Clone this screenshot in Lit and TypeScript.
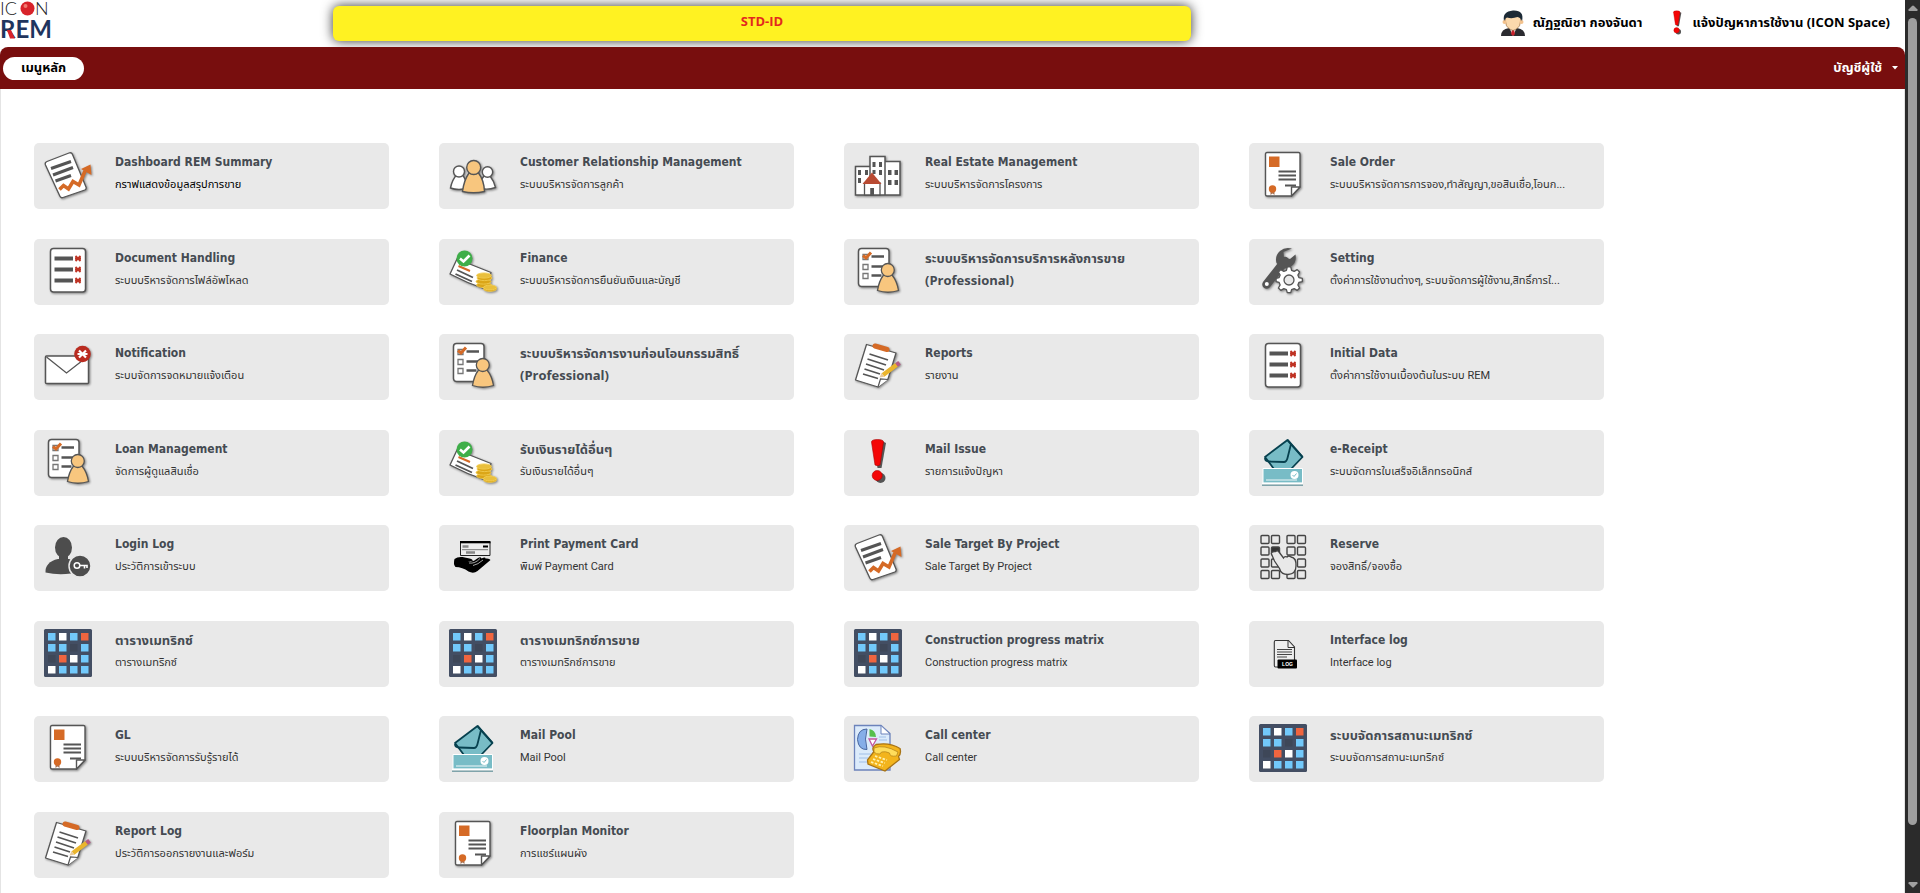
import { LitElement, html, svg, css, nothing, TemplateResult } from "lit";
import { customElement, property } from "lit/decorators.js";

const INK = "#555";
const ORANGE = "#d56a26";
const SKIN = "#f8c67e";

const sheet = svg`
  <g fill="#fff" stroke=${INK} stroke-width="1.3" stroke-linejoin="round">
    <path d="M3 10.5 25 2q2.500-1 3.500 1.500L42 36q.8 2-1.200 3L19 46.500q-2.200.8-3.200-1.500L1.500 14q-1-2.500 1.500-3.500z"/>
  </g>
  <g stroke=${INK} stroke-width="3">
    <path d="M7 17.500 27 10.500M9 24 29 16.500M11.500 30 27 24.500"/>
  </g>
  <path d="M15.500 38.500 19.500 34.500 24.500 38 29 30.500 35 34 41 20" fill="none" stroke=${ORANGE} stroke-width="3.600"/>
  <path d="M37 18 46.500 13.500 47.500 24z" fill=${ORANGE}/>`;

const people = svg`
  <g stroke=${INK} stroke-width="1.400" fill="#fff">
    <path d="M1.500 37Q3 29 7.500 24h6q4 5 5 13Q10 40 1.500 37zM30.500 37q1-8 4.500-12h6q4 5 5.500 11.500Q38 39.500 30.500 37z"/>
    <circle cx="10" cy="20.500" r="5.500"/><circle cx="38.500" cy="21" r="5.200"/>
    <path fill=${SKIN} d="M13.500 40.500Q15 29 20 22h9.500Q35 29 35.500 40.500q-11 2.500-22 0z"/>
    <circle fill=${SKIN} cx="24.700" cy="16.500" r="7"/>
  </g>`;

const town = svg`
  <g stroke=${INK} stroke-width="1.500" fill="#fff">
    <path d="M1.500 15.500H16V44H1.500zM31 10.500h15V44H31zM16 5.500h15V44H16z"/>
  </g>
  <path fill=${INK} d="M4 19h3v5H4zM11 19h3v5h-3zM4 27h3v5H4zM18.500 11h3v5h-3zM25 11h3v5h-3zM18.500 19h3v4h-3zM25 19h3v5h-3zM34 19h3.500v5H34zM40.500 19H44v5h-3.500zM34 29h3.500v5H34zM40.500 29H44v5h-3.500z"/>
  <path d="M10.500 32H26v12H10.500z" fill="#fff" stroke=${INK} stroke-width="1.300"/>
  <path d="M8.500 33 18 21.500 27.500 33z" fill="#b84a32"/><path d="M16.200 37h3.800v8h-3.800z" fill=${INK}/>`;

const certificate = svg`
  <path d="M8 1.500h31.500q1.500 0 1.500 1.500V36l-8.500 9H8q-1.500 0-1.500-1.500V3q0-1.500 1.500-1.500z" fill="#fff" stroke=${INK} stroke-width="1.400"/>
  <path d="M41 36h-8.500v9z" fill="#fff" stroke=${INK} stroke-width="1.400" stroke-linejoin="round"/>
  <path d="M10 5.500h10.500V16H10z" fill=${ORANGE}/>
  <path d="M19.500 20.500H37M19.500 24.500H37M19.500 28.500H37M26 34.500H37" stroke=${INK} stroke-width="2.200"/>
  <path d="M11.500 40v4l2-1.500 2 1.500v-4z" fill="#a9775a"/><circle cx="13.500" cy="38" r="3.700" fill=${ORANGE}/>`;

const list = svg`
  <rect x="6.500" y="1.500" width="35" height="43.500" rx="3" fill="#fff" stroke=${INK} stroke-width="1.500"/>
  <path d="M10.500 11.500h18.500M10.500 22.500h18.500M10.500 33.500h18.500" stroke=${INK} stroke-width="3.800"/>
  <g stroke="#bf3324" stroke-width="1.800">
    ${[11.5, 22.5, 33.5].map((y) => svg`<path d="M31.500 ${y - 2.5}l5 5M36.500 ${y - 2.5}l-5 5M31 ${y}h6"/>`)}
  </g>`;

const envelope = svg`
  <rect x="1.500" y="14" width="43" height="27.500" rx="1" fill="#fff" stroke=${INK} stroke-width="1.500"/>
  <path d="M2.500 15 22.500 31 43 15" fill="none" stroke=${INK} stroke-width="1.300"/>
  <circle cx="38.500" cy="12" r="8.300" fill="#b92b20"/>
  <path d="M35 8.500l7 7M42 8.500l-7 7M33.500 12h10" stroke="#fff" stroke-width="2.200"/>`;

const cheque = svg`
  <path d="M1 27 8 12 42 25.500 36 42Q18 36 1 27z" fill="#fff" stroke=${INK} stroke-width="1.300" stroke-linejoin="round"/>
  <path d="M9.500 19 21 24" stroke=${ORANGE} stroke-width="2"/>
  <path d="M8 23 24 30.500M6.500 27 23 34.500" stroke=${INK} stroke-width="1.800"/>
  <circle cx="15.500" cy="11.500" r="8" fill="#3fae49"/>
  <path d="M11 11.500 14.500 14.500 20.500 8.500" fill="none" stroke="#fff" stroke-width="2.600"/>
  <g fill="#dba618" stroke="#f2ce55" stroke-width=".8">
    <ellipse cx="35" cy="38" rx="7.500" ry="2.600"/><ellipse cx="34.500" cy="34.500" rx="7.500" ry="2.600"/>
    <ellipse cx="35.500" cy="31" rx="7.500" ry="2.600"/><ellipse cx="35" cy="28.500" rx="7.500" ry="2.600" fill="#e9bf3c"/>
    <ellipse cx="41" cy="42" rx="6.500" ry="2.400"/><ellipse cx="41" cy="40.500" rx="6.500" ry="2.400" fill="#e9bf3c"/>
  </g>`;

const checklist = svg`
  <rect x="4.500" y="1.500" width="30.500" height="38" rx="3" fill="#fff" stroke=${INK} stroke-width="1.500"/>
  <g fill="#fff" stroke="#777" stroke-width="1.300">
    <path d="M9 7.500h5v5H9zM9 17.500h5v5H9zM9 26.500h5v5H9z"/>
  </g>
  <path d="M17.500 9.500H30M17.500 19.500h12M17.500 28.500h10" stroke=${INK} stroke-width="2.600"/>
  <path d="M9 8.500 12 11 17 5.500" fill="none" stroke=${ORANGE} stroke-width="3"/>
  <g fill=${SKIN} stroke=${INK} stroke-width="1.300">
    <path d="M23.500 43.500Q25 34 29.500 28h8.500q5 6 6.500 15.500-10.500 3.500-21 0z"/><circle cx="33.800" cy="23" r="6.500"/>
  </g>`;

const tools = svg`
  <path d="M7.500 37.500 26 14" stroke=${INK} stroke-width="8.500" stroke-linecap="round"/>
  <path d="M33 1.500q-7-2-12 2.500-5.500 5-3.500 12l5.500 5.500q9 .5 12.500-5.500 2-4 1-8.500l-5.500 4.500-6-1-.5-6z" fill=${INK}/>
  <circle cx="7.800" cy="37" r="2" fill="#fff"/>
  <g transform="translate(30 33) scale(.86) translate(-29.500 -35.250)" fill="#fff" stroke=${INK} stroke-width="1.500" stroke-linejoin="round">
    <path d="M27.500 20h4l1 4 3 1.200 3.500-2 2.800 2.800-2 3.500 1.200 3 4 1v3.500l-4 1-1.200 3 2 3.500-2.800 2.800-3.500-2-3 1.200-1 3.500h-4l-1-3.500-3-1.200-3.500 2-2.800-2.800 2-3.500-1.200-3-3.500-1v-3.500l3.500-1 1.200-3-2-3.500 2.800-2.800 3.500 2 3-1.200z"/>
    <circle cx="29.500" cy="35.250" r="5.800" fill="#e9e9e9"/>
  </g>`;

const clipboard = svg`
  <path d="M12.500 2.500 42 11 34 37 24 45 1.500 38z" fill="#fff" stroke=${INK} stroke-width="1.300" stroke-linejoin="round"/>
  <path d="M24 45l2.500-8 7.500.5" fill="#fff" stroke=${INK} stroke-width="1.200"/>
  <path d="M15.500 12 34 18M13.500 17 32 23M12 22 30 28M10.500 27 26 32M9 32 24 36.500" stroke=${INK} stroke-width="1.700"/>
  <path d="M21 4 33 7.500" stroke=${ORANGE} stroke-width="5" stroke-linecap="round"/>
  <path d="M29 33 43 22.500" stroke="#eab52d" stroke-width="4.500"/>
  <path d="M25.500 35.500l2-4.500 3 3.800z" fill="#e8c99a"/><path d="M42.500 23l3-2.200" stroke="#b65a86" stroke-width="4.500"/>`;

const exclamation = svg`
  <path d="M20 5q6-4 12 0l-4.500 25h-4z" fill="#555"/><circle cx="26.500" cy="40" r="5" fill="#555"/>
  <path d="M17.500 4q0-2.500 6-2.500T29.500 4L26 27q-2.500 1.500-5 0z" fill="#f40606" stroke="#a00" stroke-width=".6"/>
  <circle cx="23.200" cy="37.500" r="5" fill="#f40606" stroke="#a00" stroke-width=".6"/>`;

const mailbox = svg`
  <path d="M6 19 28.500 2 43.500 19 32 31H15z" fill="#78bcc6" stroke="#07414f" stroke-width="1.800" stroke-linejoin="round"/>
  <path d="M6 20q0 3.500 4 3.500l15 .5q2.500 0 3.500-4L32 6" fill="none" stroke="#07414f" stroke-width="1.800"/>
  <path d="M28.500 2 43.500 19" stroke="#07414f" stroke-width="2"/>
  <path d="M4 30.500h39.500V45H4z" fill="#78bcc6" stroke="#fff" stroke-width="1"/>
  <path d="M7 42h31" stroke="#fff" stroke-width=".9"/><circle cx="35.500" cy="37" r="4" fill="#fff"/>
  <path d="M33.500 37l1.500 1.500 2.500-3" fill="none" stroke="#78bcc6"/>
  <path d="M3 45.500h41" stroke="#fff" stroke-width="1.600"/><path d="M3 47.200h41" stroke="#7fa3aa" stroke-width="1.400"/>`;

const userKey = svg`
  <path d="M1.500 39.500q-.5-10.500 12.500-13.500l11 0q4 1 6 3l-4 11.500q-13 2-25.500-1z" fill="#4d4d4d"/>
  <ellipse cx="19.500" cy="14.500" rx="8.500" ry="10.500" fill="#4d4d4d"/><path d="M15 22h9v7h-9z" fill="#4d4d4d"/>
  <circle cx="36" cy="33" r="11" fill="#4d4d4d" stroke="#e9e9e9" stroke-width="1.500"/>
  <circle cx="33" cy="32.500" r="2.800" fill="none" stroke="#fff" stroke-width="1.500"/>
  <path d="M36 32.500h7v2.500M40.500 32.500v3" fill="none" stroke="#fff" stroke-width="1.600"/>`;

const payment = svg`
  <path d="M11.500 9h29.500v13.500H11.500z" fill="#eee" stroke="#222"/><path d="M11 8h30.500v2.300H11z"/>
  <path d="M34 13.500h5" stroke="#000" stroke-width="2"/><path d="M13.500 13.500h6M17 19.500h9" stroke="#888" stroke-width="2.400"/>
  <path d="M13 16.700h26" stroke="#777"/>
  <path d="M5.500 26q3-2.500 8-2l7 1.500q4 1 3 2.500l-5 0q6 1.500 9-2 4-3 5-.5 4-2 4 0 4-.500 5 1.500l-13 11q-4 3-9 .5-6-4.500-13-4.500-2.500-3-1-8z"/>
  <path d="M20 30q6 1 11-4.500M24 32.500q5-1 10-5.500" stroke="#e9e9e9" stroke-width=".7" fill="none"/>`;

const CELLS = ["bwbo", "bb-b", "-owb", "wbbb"];
const CELL_FILL: Record<string, string> = { b: "#72c9fb", w: "#fff", o: "#f0653f", "-": "#3e4758" };
const matrix = svg`
  <rect width="48" height="48" rx="1.500" fill="#434e63"/>
  ${CELLS.flatMap((row, r) =>
    [...row].map((c, i) => svg`<rect x=${4 + i * 11} y=${4 + r * 11} width="7.500" height="7.500" fill=${CELL_FILL[c]}/>`)
  )}`;

const seats = svg`
  ${[2.5, 14, 26, 37.5].map((y) =>
    [2, 12.5, 28, 38.5].map((x) => svg`<rect x=${x} y=${y} width="8" height="8" rx="1" fill=${x === 12.5 && y === 14 ? "#333" : "none"} stroke="#444" stroke-width="1.400"/>`)
  )}
  <path d="M16.500 18.500q2-1.500 3.500.5l4.500 6q1-2 3.500-1 1.500-2 4 0 5.500 1 5 9 0 8-8 8.500-7 0-8.500-6l-5-7.500-3-7q-.5-2 3-2.500z" fill="#e9e9e9" stroke="#444" stroke-width="1.300"/>`;

const logFile = svg`
  <path d="M16.500 11.500h13l6 6.500v20h-19q-1.200 0-1.200-1.500V13q0-1.500 1.200-1.500z" fill="#eee" stroke="#333" stroke-width="1.100"/>
  <path d="M29 11.500V18.500h6.500" fill="none" stroke="#333"/>
  <path d="M18 20.500h15M18 23h15M18 25.500h15M18 28h10" stroke="#444" stroke-width="1"/>
  <rect x="18.500" y="30.500" width="19.500" height="9" rx="1"/>
  <text class="tag" x="28.500" y="37" text-anchor="middle">LOG</text>`;

const callCenter = svg`
  <path d="M.5 1.500H27l9 8V46H.5z" fill="#dcebfb" stroke="#6c83bb" stroke-width="1.300"/>
  <path d="M27 1.500V10h9z" fill="#fff" stroke="#6c83bb"/>
  <path d="M5 30h12M5 34h9M5 38h10M25 16h8M25 13h7" stroke="#9fbfe8" stroke-width="1.200"/>
  <path d="M13 5q-9 0-9.500 10.500Q4.500 26 13 25.500 10 15 13 5z" fill="#86aee8" stroke="#46659f"/>
  <path d="M15.500 12.500V5q6 1 6.500 8z" fill="#56bf4d"/><path d="M15 15h7.500l-4 7z" fill="#fff" stroke="#c3579f" stroke-width="1.300"/>
  <path d="M20 27.500q-3-3.500 2-7 14-2.500 24 4 1.500 5-1.500 8l1 3L31 47l-17-7-.5-4z" fill="#f3b41c" stroke="#a87416" stroke-width="1.300"/>
  <path d="M20 24q10-4 24 4l-1.500 4q-7 1-7-3-4-2-8-1l-1.500 2q-4 .5-6-2z" fill="#ffdd5c" stroke="#b8861b" stroke-width=".8"/>
  <path d="M21 32l12 4M19 35l12 4M17 38l12 4" stroke="#fff1ae" stroke-width="1.800" stroke-dasharray="2.500 1.500"/>`;

const person = svg`
  <path d="M0 26q0-7 8-8h8q8 1 8 8z" fill="#2b2b30"/><path d="M8.500 18 12 26l3.500-8z" fill="#fff"/><path d="M11 19.500h2l1 4.500-2 2-2-2z" fill="#c8202b"/>
  <path d="M4.500 11.500q0 5 4 7.500l3.500 1.500 3.500-1.500q4-2.500 4-7.500V6h-15z" fill="#fbd9ad" stroke="#8a6238" stroke-width=".6"/>
  <circle cx="3.500" cy="12" r="2" fill="#f3c28d"/><circle cx="20.500" cy="12" r="2" fill="#f3c28d"/>
  <path d="M3 11Q1 1.500 12 .5 23.500 0 21 11 19.500 7.500 16.500 7 11 9 6 7.500 4 8 3 11z" fill="#1c2a36"/>`;

const ICONS: Record<string, { art: TemplateResult<2>; flat?: boolean }> = {
  sheet: { art: sheet },
  people: { art: people },
  town: { art: town },
  certificate: { art: certificate },
  list: { art: list },
  envelope: { art: envelope },
  cheque: { art: cheque },
  checklist: { art: checklist },
  tools: { art: tools },
  clipboard: { art: clipboard },
  exclamation: { art: exclamation, flat: true },
  mailbox: { art: mailbox, flat: true },
  userKey: { art: userKey, flat: true },
  payment: { art: payment, flat: true },
  matrix: { art: matrix, flat: true },
  seats: { art: seats, flat: true },
  logFile: { art: logFile, flat: true },
  callCenter: { art: callCenter, flat: true },
};

interface Module {
  icon: string;
  title: string;
  note?: string;
  current?: boolean;
}

const MODULES: Module[] = [
  { icon: "sheet", title: "Dashboard REM Summary", note: "กราฟแสดงข้อมูลสรุปการขาย", current: true },
  { icon: "people", title: "Customer Relationship Management", note: "ระบบบริหารจัดการลูกค้า" },
  { icon: "town", title: "Real Estate Management", note: "ระบบบริหารจัดการโครงการ" },
  { icon: "certificate", title: "Sale Order", note: "ระบบบริหารจัดการการจอง,ทำสัญญา,ขอสินเชื่อ,โอนก..." },
  { icon: "list", title: "Document Handling", note: "ระบบบริหารจัดการไฟล์อัพโหลด" },
  { icon: "cheque", title: "Finance", note: "ระบบบริหารจัดการยืนยันเงินและบัญชี" },
  { icon: "checklist", title: "ระบบบริหารจัดการบริการหลังการขาย (Professional)" },
  { icon: "tools", title: "Setting", note: "ตั้งค่าการใช้งานต่างๆ, ระบบจัดการผู้ใช้งาน,สิทธิ์การใ..." },
  { icon: "envelope", title: "Notification", note: "ระบบจัดการจดหมายแจ้งเตือน" },
  { icon: "checklist", title: "ระบบบริหารจัดการงานก่อนโอนกรรมสิทธิ์ (Professional)" },
  { icon: "clipboard", title: "Reports", note: "รายงาน" },
  { icon: "list", title: "Initial Data", note: "ตั้งค่าการใช้งานเบื้องต้นในระบบ REM" },
  { icon: "checklist", title: "Loan Management", note: "จัดการผู้ดูแลสินเชื่อ" },
  { icon: "cheque", title: "รับเงินรายได้อื่นๆ", note: "รับเงินรายได้อื่นๆ" },
  { icon: "exclamation", title: "Mail Issue", note: "รายการแจ้งปัญหา" },
  { icon: "mailbox", title: "e-Receipt", note: "ระบบจัดการใบเสร็จอิเล็กทรอนิกส์" },
  { icon: "userKey", title: "Login Log", note: "ประวัติการเข้าระบบ" },
  { icon: "payment", title: "Print Payment Card", note: "พิมพ์ Payment Card" },
  { icon: "sheet", title: "Sale Target By Project", note: "Sale Target By Project" },
  { icon: "seats", title: "Reserve", note: "จองสิทธิ์/จองซื้อ" },
  { icon: "matrix", title: "ตารางเมทริกซ์", note: "ตารางเมทริกซ์" },
  { icon: "matrix", title: "ตารางเมทริกซ์การขาย", note: "ตารางเมทริกซ์การขาย" },
  { icon: "matrix", title: "Construction progress matrix", note: "Construction progress matrix" },
  { icon: "logFile", title: "Interface log", note: "Interface log" },
  { icon: "certificate", title: "GL", note: "ระบบบริหารจัดการรับรู้รายได้" },
  { icon: "mailbox", title: "Mail Pool", note: "Mail Pool" },
  { icon: "callCenter", title: "Call center", note: "Call center" },
  { icon: "matrix", title: "ระบบจัดการสถานะเมทริกซ์", note: "ระบบจัดการสถานะเมทริกซ์" },
  { icon: "clipboard", title: "Report Log", note: "ประวัติการออกรายงานและฟอร์ม" },
  { icon: "certificate", title: "Floorplan Monitor", note: "การแชร์แผนผัง" },
];

const THAI = /[\u0E00-\u0E7F]/;

@customElement("module-card")
export class ModuleCard extends LitElement {
  @property({ attribute: false }) module!: Module;

  static styles = css`
    :host {
      display: block;
    }
    .card {
      box-sizing: border-box;
      display: flex;
      gap: 23px;
      height: 66px;
      padding: 8px 10px;
      border-radius: 5px;
      background: #e9e9e9;
      color: #333;
      text-decoration: none;
      line-height: 22px;
    }
    .icon {
      flex: none;
      width: 48px;
      height: 48px;
      overflow: visible;
    }
    .raised {
      filter: drop-shadow(1px 1px 1px rgba(0, 0, 0, 0.45));
    }
    .tag {
      fill: #fff;
      font: bold 5px "Liberation Sans", sans-serif;
    }
    .text {
      min-width: 0;
      white-space: nowrap;
    }
    .title {
      display: block;
      font-family: Tahoma, "DejaVu Sans Condensed", "Noto Sans", "Noto Sans Thai", sans-serif;
      font-size: 12px;
      font-weight: bold;
      color: #454b52;
      white-space: normal;
    }
    .title:lang(th) {
      font-family: Tahoma, "Open Sans", "Noto Sans Thai", sans-serif;
      font-size: 13px;
    }
    .note {
      display: block;
      margin-top: 1px;
      font-family: Tahoma, Roboto, "Noto Sans Thai", sans-serif;
      font-size: 11px;
    }
    .current {
      color: #000;
    }
  `;

  render() {
    const m = this.module;
    const icon = ICONS[m.icon];
    return html`<a class="card" href="#">
      <svg class="icon ${icon.flat ? "" : "raised"}" viewBox="0 0 48 48" aria-hidden="true">${icon.art}</svg>
      <span class="text">
        <span class="title" lang=${THAI.test(m.title) ? "th" : "en"}>${m.title}</span>
        ${m.note ? html`<span class="note ${m.current ? "current" : ""}">${m.note}</span>` : nothing}
      </span>
    </a>`;
  }
}

@customElement("app-root")
export class AppRoot extends LitElement {
  static styles = css`
    :host {
      display: flex;
      min-height: 100vh;
      background: #fff;
      font-family: Tahoma, "Open Sans", "Noto Sans Thai", sans-serif;
      font-size: 13px;
      color: #000;
    }
    .page {
      flex: 1;
      min-width: 0;
      display: flex;
      flex-direction: column;
    }
    .header {
      display: grid;
      grid-template-columns: 35fr 90fr 75fr;
      height: 47px;
    }
    .logo {
      width: 52px;
      height: 40px;
      overflow: visible;
    }
    .thin {
      font: 300 18px Lato, sans-serif;
      fill: #222;
    }
    .strong {
      font: bold 24px Lato, sans-serif;
      fill: #1f355e;
    }
    .banner {
      height: 35px;
      margin-top: 6px;
      border-radius: 6px;
      background: #fff222;
      box-shadow: 0 0 12px rgba(0, 0, 0, 0.8);
      color: #e3281e;
      font-weight: bold;
      line-height: 30px;
      text-align: center;
    }
    .links {
      display: flex;
      justify-content: flex-end;
      gap: 28px;
      padding: 10px 15px 0 0;
      font-weight: bold;
    }
    .link {
      display: flex;
      align-items: center;
      gap: 8px;
      height: 26px;
      color: #000;
      text-decoration: none;
      white-space: nowrap;
    }
    .avatar {
      width: 24px;
      height: 26px;
    }
    .alert {
      width: 14px;
      height: 26px;
    }
    .bar {
      display: flex;
      align-items: center;
      justify-content: space-between;
      height: 42px;
      padding: 0 7px 0 3px;
      border-radius: 8px 8px 0 0;
      background: #780e0e;
    }
    .bar button {
      border: 0;
      font: bold 13px Tahoma, "Open Sans", "Noto Sans Thai", sans-serif;
      cursor: pointer;
    }
    .menu {
      height: 23px;
      padding: 0 18px;
      border-radius: 12px;
      background: #fff;
      color: #000;
    }
    .account {
      display: flex;
      align-items: center;
      gap: 10px;
      padding: 0;
      background: none;
      color: #fff;
    }
    .caret {
      width: 6px;
      height: 4px;
      fill: #fff;
    }
    .content {
      flex: 1;
      display: grid;
      grid-template-columns: repeat(auto-fill, 355px);
      column-gap: 50px;
      align-content: space-between;
      padding: 54px 250px 15px 33px;
      border: 1px solid #e4e4e4;
      border-width: 0 1px;
    }
    .scroll {
      flex: none;
      box-sizing: border-box;
      position: sticky;
      top: 0;
      width: 15px;
      height: 100vh;
      display: flex;
      flex-direction: column;
      align-items: center;
      padding: 5px 0;
      background: #2b2b2b;
      fill: #9f9f9f;
    }
    .arrow {
      width: 10px;
      height: 6px;
    }
    .track {
      flex: 1;
      margin: 7px 0 5px;
    }
    .thumb {
      width: 9px;
      height: 94%;
      border-radius: 5px;
      background: #9f9f9f;
    }
  `;

  render() {
    return html`
      <div class="page">
        <header class="header">
          <svg class="logo" viewBox="0 0 52 40" role="img" aria-label="ICON REM">
            <text class="thin" x="0" y="15">IC</text>
            <text class="thin" x="35" y="15">N</text>
            <circle cx="27.500" cy="8.500" r="7" fill="#d8232a" />
            <circle cx="25.500" cy="6" r="2" fill="#f07a70" />
            <text class="strong" x="0" y="38">REM</text>
            <path d="M7 30h4l4 8.500h-5z" fill="#d8232a" />
          </svg>
          <div class="banner">STD-ID</div>
          <nav class="links">
            <a class="link" href="#">
              <svg class="avatar" viewBox="0 0 24 26" aria-hidden="true">${person}</svg>
              ณัฏฐณิชา กองจันดา
            </a>
            <a class="link" href="#">
              <svg class="alert" viewBox="16 0 16 48" aria-hidden="true">${exclamation}</svg>
              แจ้งปัญหาการใช้งาน (ICON Space)
            </a>
          </nav>
        </header>
        <nav class="bar">
          <button class="menu">เมนูหลัก</button>
          <button class="account">
            บัญชีผู้ใช้
            <svg class="caret" viewBox="0 0 6 4" aria-hidden="true"><path d="M0 0h6L3 3.500z" /></svg>
          </button>
        </nav>
        <main class="content">${MODULES.map((m) => html`<module-card .module=${m}></module-card>`)}</main>
      </div>
      <div class="scroll" aria-hidden="true">
        <svg class="arrow" viewBox="0 0 10 6"><path d="M1 6Q0 5.500.5 4.500L4 1q1-1 2 0l3.500 3.500Q10 5.500 9 6z" /></svg>
        <div class="track"><div class="thumb"></div></div>
        <svg class="arrow" viewBox="0 0 10 6"><path d="M1 0Q0 .5.5 1.500L4 5q1 1 2 0l3.500-3.500Q10 .5 9 0z" /></svg>
      </div>
    `;
  }
}
